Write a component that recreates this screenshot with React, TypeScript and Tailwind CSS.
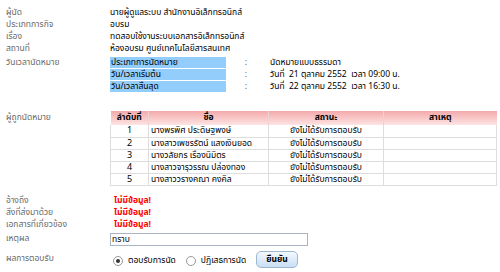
import React from "react";

const Label = ({ children, className = "" }: { children: React.ReactNode; className?: string }) => (
  <div className={"w-[110px] shrink-0 pl-[6px] text-[#6a6a6a] whitespace-nowrap " + className}>{children}</div>
);

export default function App() {
  const people = [
    "นางพรพิศ ประดิษฐพงษ์",
    "นางสาวเพชรรัตน์ แสงเงินยอด",
    "นางวลัยกร เรืองนิมิตร",
    "นางสาวจารุวรรณ ปล่องทอง",
    "นางสาววรางคณา คงคิล",
  ];
  return (
    <div
      className="w-[500px] h-[272px] bg-white text-[8.5px] leading-[12px] text-black overflow-hidden pt-[7px]"
      style={{ fontFamily: 'Tahoma, "Noto Sans Thai", "Noto Sans", sans-serif' }}
    >
      <div className="flex h-[12px]"><Label>ผู้นัด</Label><div className="whitespace-nowrap">นายผู้ดูแลระบบ สำนักงานอิเล็กทรอนิกส์</div></div>
      <div className="flex h-[12px]"><Label>ประเภทภารกิจ</Label><div>อบรม</div></div>
      <div className="flex h-[12px]"><Label>เรื่อง</Label><div className="whitespace-nowrap">ทดสอบใช้งานระบบเอกสารอิเล็กทรอนิกส์</div></div>
      <div className="flex h-[12px]"><Label>สถานที่</Label><div className="whitespace-nowrap">ห้องอบรม ศูนย์เทคโนโลยีสารสนเทศ</div></div>
      <div className="flex mt-[2px] h-[36px]">
        <Label>วันเวลานัดหมาย</Label>
        <div className="flex flex-col">
          {[
            ["ประเภทการนัดหมาย", "นัดหมายแบบธรรมดา"],
            ["วัน/เวลาเริ่มต้น", "วันที่  21 ตุลาคม 2552  เวลา 09:00 น."],
            ["วัน/เวลาสิ้นสุด", "วันที่  22 ตุลาคม 2552  เวลา 16:30 น."],
          ].map(([a, b], i) => (
            <div key={i} className="flex h-[12px]">
              <div className="w-[116px] h-[12px] bg-[#92cdfc] pl-[1px] border-b border-white leading-[12px] whitespace-nowrap">{a}</div>
              <div className="w-[40px] text-center text-[#555] leading-[12px]">:</div>
              <div className="whitespace-pre pl-[4px] leading-[12px]">{b}</div>
            </div>
          ))}
        </div>
      </div>
      <div className="flex mt-[18px] h-[74px]">
        <Label className="pt-[1px]">ผู้ถูกนัดหมาย</Label>
        <table className="w-[387px] border-collapse text-center table-fixed">
          <thead>
            <tr className="h-[14px] bg-gradient-to-b from-[#f3a9ab] to-[#fde4e4]">
              <th className="w-[38px] h-[14px] p-0 border-r border-[#ecd2d2] font-bold leading-[14px]">ลำดับที่</th>
              <th className="w-[120px] h-[14px] p-0 border-r border-[#ecd2d2] font-bold leading-[14px]">ชื่อ</th>
              <th className="w-[115px] h-[14px] p-0 border-r border-[#ecd2d2] font-bold leading-[14px]">สถานะ</th>
              <th className="h-[14px] p-0 font-bold leading-[14px]">สาเหตุ</th>
            </tr>
          </thead>
          <tbody>
            {people.map((p, i) => (
              <tr key={i} className="h-[12px] border-b border-[#dddddd]">
                <td className="h-[12px] p-0 leading-[11px] border-r border-l border-[#dddddd] text-[9px]">{i + 1}</td>
                <td className="h-[12px] p-0 leading-[11px] border-r border-[#dddddd] text-left pl-[2px] whitespace-nowrap overflow-hidden">{p}</td>
                <td className="h-[12px] p-0 leading-[11px] border-r border-[#dddddd] whitespace-nowrap">ยังไม่ได้รับการตอบรับ</td>
                <td className="h-[12px] p-0 border-r border-[#dddddd]"></td>
              </tr>
            ))}
          </tbody>
        </table>
      </div>
      <div className="flex h-[12px] mt-[10px]"><Label>อ้างถึง</Label><div className="pl-[4px] text-[#ff0000] font-bold whitespace-nowrap">ไม่มีข้อมูล!</div></div>
      <div className="flex h-[12px]"><Label>สิ่งที่ส่งมาด้วย</Label><div className="pl-[4px] text-[#ff0000] font-bold whitespace-nowrap">ไม่มีข้อมูล!</div></div>
      <div className="flex h-[12px]"><Label>เอกสารที่เกี่ยวข้อง</Label><div className="pl-[4px] text-[#ff0000] font-bold whitespace-nowrap">ไม่มีข้อมูล!</div></div>
      <div className="flex h-[14px] items-center mt-[1px]">
        <Label>เหตุผล</Label>
        <div className="w-[198px] h-[13px] border border-[#aab4c4] pl-[1px] leading-[11px]">ทราบ</div>
      </div>
      <div className="flex items-center mt-[5px] h-[17px]">
        <Label className="-mt-[2px]">ผลการตอบรับ</Label>
        <div className="flex items-center pl-[3px] pt-[3px]">
          <span className="w-[10px] h-[10px] rounded-full border border-[#999] bg-white flex items-center justify-center">
            <span className="w-[4px] h-[4px] rounded-full bg-[#333]" />
          </span>
          <span className="ml-[5px] whitespace-nowrap">ตอบรับการนัด</span>
          <span className="ml-[10px] w-[10px] h-[10px] rounded-full border border-[#999] bg-white" />
          <span className="ml-[5px] whitespace-nowrap">ปฏิเสธการนัด</span>
        </div>
        <button className="ml-[10px] h-[17px] px-[9px] rounded-[5px] border border-[#9bb8d3] bg-gradient-to-b from-[#f4f9ff] to-[#c9def3] font-bold text-[8.5px] leading-[15px] whitespace-nowrap">ยืนยัน</button>
      </div>
    </div>
  );
}
